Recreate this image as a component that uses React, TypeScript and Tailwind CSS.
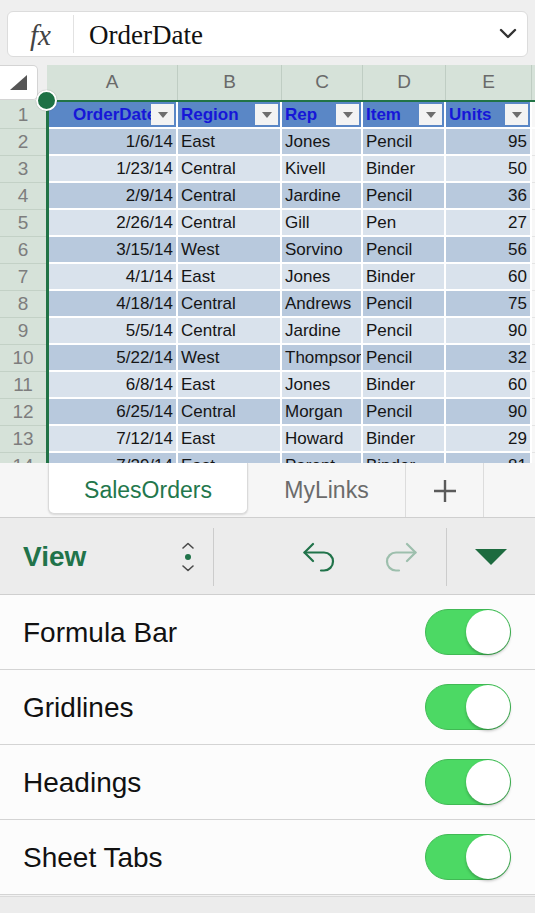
import React from "react";

const rows: string[][] = [
  ["1/6/14", "East", "Jones", "Pencil", "95"],
  ["1/23/14", "Central", "Kivell", "Binder", "50"],
  ["2/9/14", "Central", "Jardine", "Pencil", "36"],
  ["2/26/14", "Central", "Gill", "Pen", "27"],
  ["3/15/14", "West", "Sorvino", "Pencil", "56"],
  ["4/1/14", "East", "Jones", "Binder", "60"],
  ["4/18/14", "Central", "Andrews", "Pencil", "75"],
  ["5/5/14", "Central", "Jardine", "Pencil", "90"],
  ["5/22/14", "West", "Thompson", "Pencil", "32"],
  ["6/8/14", "East", "Jones", "Binder", "60"],
  ["6/25/14", "Central", "Morgan", "Pencil", "90"],
  ["7/12/14", "East", "Howard", "Binder", "29"],
  ["7/29/14", "East", "Parent", "Binder", "81"],
];

const widths = ["w-[129px]", "w-[104px]", "w-[81px]", "w-[83px]", "w-[86px]"];
const headers = ["OrderDate", "Region", "Rep", "Item", "Units"];

function DropBtn() {
  return (
    <div className="absolute right-[2px] top-[2px] w-[23px] h-[21px] bg-[#f3f3f3] flex items-center justify-center">
      <svg width="10" height="6" viewBox="0 0 10 6">
        <path d="M0 0 H10 L5 6 Z" fill="#6e6e6e" />
      </svg>
    </div>
  );
}

function Toggle() {
  return (
    <div className="relative w-[86px] h-[46px] rounded-full bg-[#4cd964] border border-[#41b955]">
      <div className="absolute right-[0px] top-[0px] w-[44px] h-[44px] rounded-full bg-white shadow-[0_2px_3px_rgba(0,0,0,0.25)]" />
    </div>
  );
}

export default function App() {
  return (
    <div className="w-[535px] h-[913px] overflow-hidden bg-[#ececec] font-['Liberation_Sans',Arial,sans-serif]">
      {/* Formula bar */}
      <div className="h-[65px] bg-[#efefef] pt-[11px] px-[7px]">
        <div className="h-[46px] bg-white rounded-[6px] border border-[#dcdcdc] flex items-center">
          <div className="w-[65px] flex justify-center items-center font-['Liberation_Serif',serif] italic text-[29px] text-[#444] leading-none pt-[2px]">
            fx
          </div>
          <div className="w-px h-[38px] bg-[#e2e2e2]" />
          <div className="flex-1 pl-[15px] font-['Liberation_Serif',serif] text-[27px] text-[#111] leading-none pt-[2px]">
            OrderDate
          </div>
          <div className="w-[18px] mr-[10px] flex items-center">
            <svg width="18" height="12" viewBox="0 0 18 12">
              <path d="M2 2 L9 9 L16 2" fill="none" stroke="#333" strokeWidth="2.4" strokeLinecap="round" strokeLinejoin="round" />
            </svg>
          </div>
        </div>
      </div>

      {/* Grid */}
      <div className="relative">
        {/* Column header */}
        <div className="h-[35px] flex bg-[#efefef]">
          <div className="w-[47px]">
            <div className="w-[38px] h-[35px] bg-white rounded-r-[5px] border border-l-0 border-[#d4d4d4] flex items-center justify-center">
              <svg width="17" height="15" viewBox="0 0 17 15">
                <path d="M17 0 V15 H0 Z" fill="#555" />
              </svg>
            </div>
          </div>
          <div className="flex flex-1 bg-[#d6e2d9]">
            <div className="w-[131px] border-r border-[#bfcdc3] flex items-center justify-center text-[19px] text-[#6a6a6a]">A</div>
            {["B", "C", "D", "E"].map((l, i) => (
              <div key={l} className={`${widths[i + 1]} border-r border-[#bfcdc3] flex items-center justify-center text-[19px] text-[#6a6a6a]`}>
                {l}
              </div>
            ))}
            <div className="flex-1" />
          </div>
        </div>

        {/* Body */}
        <div className="h-[363px] overflow-hidden flex">
          <div className="w-[46px] bg-[#d6e2d9] pt-[2px]">
            {Array.from({ length: 14 }).map((_, i) => (
              <div key={i} className="h-[27px] border-b border-[#c3d1c6] flex items-center justify-center text-[19px] text-[#7d7d7d] pt-[1px]">
                {i + 1}
              </div>
            ))}
          </div>
          <div className="flex-1 border-l-[3px] border-t-2 border-[#217346] bg-[#f7f7f7]">
            {/* header row */}
            <div className="flex h-[27px]">
              {headers.map((h, i) => (
                <div
                  key={h}
                  className={`${widths[i]} relative h-[27px] border-r-2 border-b-2 border-white bg-[#5a87c6] overflow-hidden flex items-center text-[17px] font-bold text-[#1616d8] pt-[1px] ${i === 0 ? "pl-[24px]" : "pl-[3px]"}`}
                >
                  <span className="whitespace-nowrap">{h}</span>
                  <DropBtn />
                </div>
              ))}
              <div className="flex-1 border-b-2 border-white" />
            </div>
            {rows.map((r, ri) => {
              const bg = ri % 2 === 0 ? "bg-[#b8c9dd]" : "bg-[#d9e2ec]";
              return (
                <div key={ri} className="flex h-[27px]">
                  {r.map((c, ci) => (
                    <div
                      key={ci}
                      className={`${widths[ci]} ${bg} h-[27px] border-r-2 border-b-2 border-white overflow-hidden whitespace-nowrap flex items-center text-[17px] text-[#151515] pt-[1px] ${ci === 0 || ci === 4 ? "justify-end pr-[3px]" : "pl-[3px]"}`}
                    >
                      {c}
                    </div>
                  ))}
                  <div className="flex-1 border-b border-[#e4e4e4]" />
                </div>
              );
            })}
          </div>
        </div>

        {/* Selection handle */}
        <div className="absolute left-[36px] top-[25px] w-[21px] h-[21px] rounded-full bg-[#1e7145] border-[2.5px] border-white shadow-[0_0_1px_rgba(0,0,0,0.4)]" />
      </div>

      {/* Sheet tabs */}
      <div className="h-[55px] bg-[#f6f6f6] flex border-b border-[#cfcfcf]">
        <div className="w-[48px]" />
        <div className="w-[200px] h-[51px] bg-white rounded-b-[6px] border border-t-0 border-[#dadada] shadow-[0_1px_2px_rgba(0,0,0,0.12)] flex items-center justify-center text-[#23774c] text-[23px] pt-[4px]">
          SalesOrders
        </div>
        <div className="w-[157px] flex items-center justify-center text-[#6b6b6b] text-[23px] pt-[1px]">MyLinks</div>
        <div className="w-px bg-[#dcdcdc]" />
        <div className="w-[77px] flex items-center justify-center pt-[1px]">
          <svg width="24" height="24" viewBox="0 0 24 24">
            <path d="M12 1 V23 M1 12 H23" stroke="#5a5a5a" strokeWidth="2.4" />
          </svg>
        </div>
        <div className="w-px bg-[#dcdcdc]" />
      </div>

      {/* Toolbar */}
      <div className="h-[77px] bg-[#ececec] border-b border-[#cfcfcf] flex items-center pt-[2px]">
        <div className="w-[213px] flex items-center justify-between pl-[23px] pr-[18px]">
          <span className="text-[28px] font-bold text-[#21734a]">View</span>
          <svg width="14" height="30" viewBox="0 0 14 30">
            <path d="M2 6 L7 1.5 L12 6" fill="none" stroke="#4a4a4a" strokeWidth="1.6" strokeLinecap="round" strokeLinejoin="round" />
            <circle cx="7" cy="15" r="3" fill="#21734a" />
            <path d="M2 24 L7 28.5 L12 24" fill="none" stroke="#4a4a4a" strokeWidth="1.6" strokeLinecap="round" strokeLinejoin="round" />
          </svg>
        </div>
        <div className="w-px h-[58px] bg-[#cccccc]" />
        <div className="w-[232px] flex items-center pl-[89px]">
          <svg width="32" height="31" viewBox="0 0 32 31">
            <path d="M10 2 L1.5 10.5 L10 19" fill="none" stroke="#21734a" strokeWidth="2.2" strokeLinecap="round" strokeLinejoin="round" />
            <path d="M1.5 10.5 H21 A9 9 0 0 1 21 28.5 H18" fill="none" stroke="#21734a" strokeWidth="2.2" strokeLinecap="round" strokeLinejoin="round" />
          </svg>
          <div className="w-[50px]" />
          <svg width="32" height="31" viewBox="0 0 32 31">
            <path d="M22 2 L30.5 10.5 L22 19" fill="none" stroke="#9dbfad" strokeWidth="2.2" strokeLinecap="round" strokeLinejoin="round" />
            <path d="M30.5 10.5 H11 A9 9 0 0 0 11 28.5 H14" fill="none" stroke="#9dbfad" strokeWidth="2.2" strokeLinecap="round" strokeLinejoin="round" />
          </svg>
        </div>
        <div className="w-px h-[58px] bg-[#cccccc]" />
        <div className="flex-1 flex items-center justify-center">
          <svg width="32" height="16" viewBox="0 0 32 16">
            <path d="M0 0 H32 L16 16 Z" fill="#1d6b3f" />
          </svg>
        </div>
      </div>

      {/* Settings list */}
      {["Formula Bar", "Gridlines", "Headings", "Sheet Tabs"].map((t) => (
        <div key={t} className="h-[75px] bg-[#fcfcfc] border-b border-[#d4d4d4] flex items-center justify-between pl-[23px] pr-[24px]">
          <span className="text-[28px] text-[#111] pt-[1px]">{t}</span>
          <Toggle />
        </div>
      ))}
      <div className="h-[2px] bg-[#f2f2f2] border-b border-[#dadada]" />
    </div>
  );
}
